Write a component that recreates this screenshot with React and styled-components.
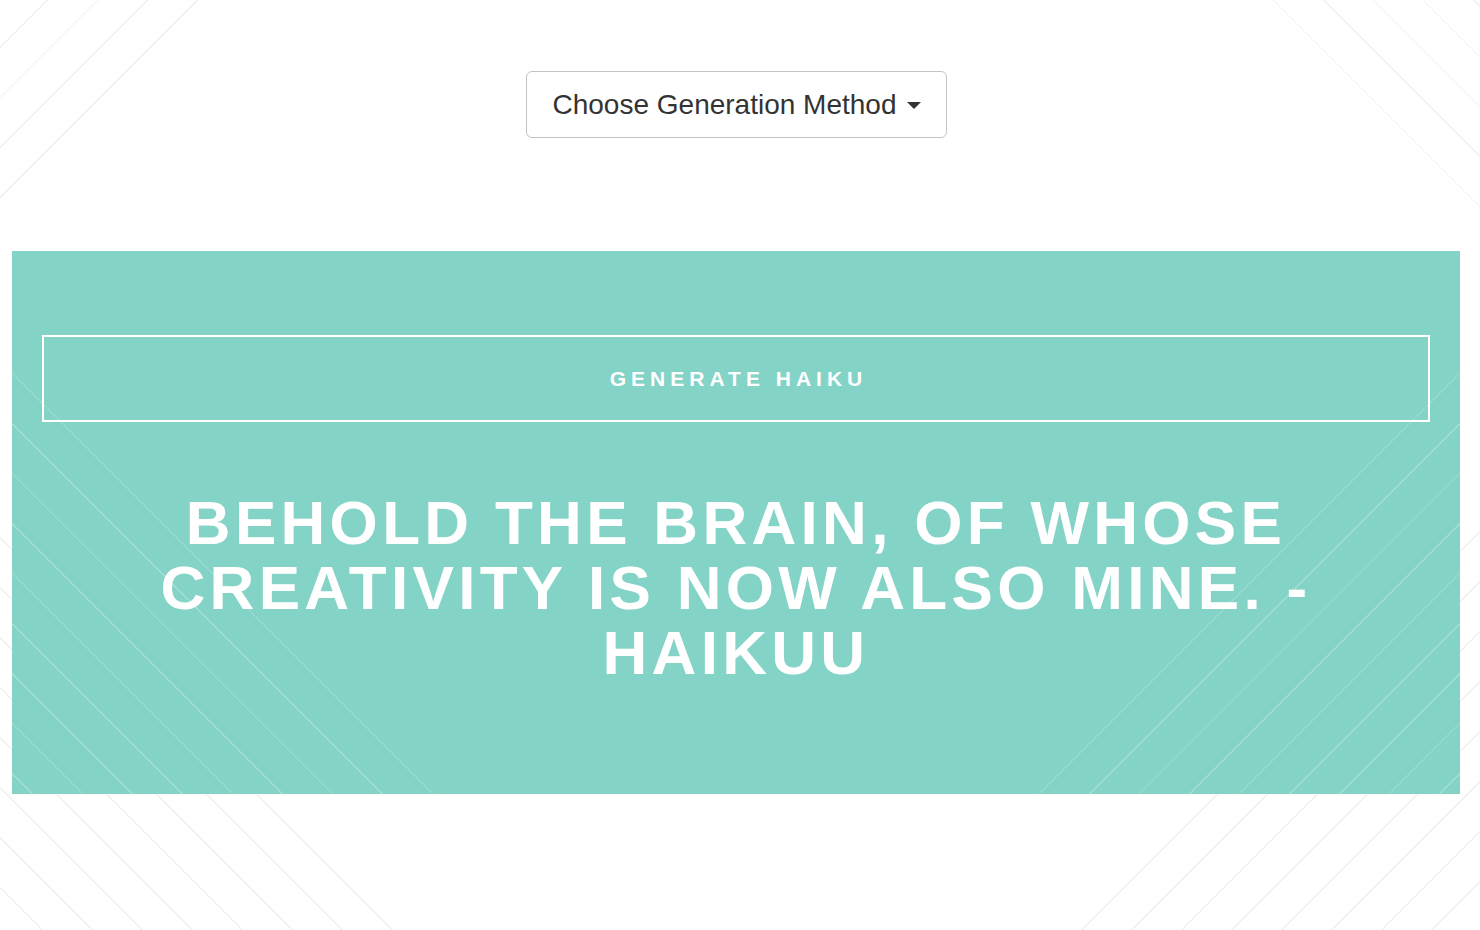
import React, { useState } from "react";
import styled, { createGlobalStyle } from "styled-components";

const S2 = Math.SQRT2;

// builds a gradient of thin 1px hairlines at the given distances (px) along the angle
function hairlines(angle, color, distances) {
  const stops = distances
    .slice()
    .sort((a, b) => a - b)
    .map((d) => `transparent ${d.toFixed(1)}px, ${color} ${d.toFixed(1)}px, ${color} ${(d + 1).toFixed(1)}px, transparent ${(d + 1).toFixed(1)}px`)
    .join(", ");
  return `linear-gradient(${angle}deg, ${stops}, transparent)`;
}

function steps(from, count, step) {
  const out = [];
  for (let i = 0; i < count; i++) out.push(from + i * step);
  return out;
}

const greyLine = "rgba(0, 0, 0, 0.06)";
const whiteLine = "rgba(255, 255, 255, 0.26)";

const pageLines = [
  hairlines(135, greyLine, [47, 97, 147, 197].map((c) => c / S2)),
  hairlines(225, greyLine, [1474, 1424, 1374, 1324, 1274].map((c) => (1480 - c) / S2)),
  hairlines(45, greyLine, steps(277 - 35.36 * 7, 8, 35.36)),
  hairlines(315, greyLine, steps(281.4 - 35.36 * 7, 8, 35.36)),
].join(", ");

const panelLines = [
  hairlines(45, whiteLine, steps(297 - 35.36 * 8, 9, 35.36)),
  hairlines(315, whiteLine, steps(297 - 35.36 * 8, 9, 35.36)),
].join(", ");

const GlobalStyle = createGlobalStyle`
  html, body {
    margin: 0;
    padding: 0;
    background: #fff;
  }
  * { box-sizing: border-box; }
`;

const Page = styled.div`
  min-height: 100vh;
  padding: 71px 20px 40px 12px;
  font-family: "Liberation Sans", Arial, "Helvetica Neue", sans-serif;
  background-color: #fff;
  background-image: ${pageLines};
  background-repeat: no-repeat;
`;

const Toolbar = styled.div`
  display: flex;
  justify-content: center;
  position: relative;
`;

const DropdownButton = styled.button`
  display: flex;
  align-items: center;
  gap: 10px;
  height: 67px;
  padding: 0 25px 0 26px;
  background: #fff;
  border: 1.5px solid #c4c4c4;
  border-radius: 6px;
  font-family: inherit;
  font-size: 28px;
  color: #333;
  cursor: pointer;
`;

const Caret = styled.span`
  width: 0;
  height: 0;
  margin-top: 2px;
  border-left: 7px solid transparent;
  border-right: 7px solid transparent;
  border-top: 7px solid #333;
`;

const Menu = styled.ul`
  position: absolute;
  top: 72px;
  margin: 0;
  padding: 6px 0;
  list-style: none;
  background: #fff;
  border: 1px solid #ccc;
  border-radius: 4px;
  box-shadow: 0 6px 12px rgba(0, 0, 0, 0.18);
  font-size: 18px;
  color: #333;
  z-index: 2;

  li {
    padding: 8px 24px;
    cursor: pointer;
  }
  li:hover { background: #f2f2f2; }
`;

const Panel = styled.section`
  margin-top: 113px;
  padding: 84px 30px 109px;
  background-color: #84d3c7;
  background-image: ${panelLines};
  background-repeat: no-repeat;
  display: flex;
  flex-direction: column;
  align-items: center;
`;

const GenerateButton = styled.button`
  width: 100%;
  height: 87px;
  background: transparent;
  border: 2px solid #fff;
  color: #fff;
  font-family: inherit;
  font-weight: bold;
  font-size: 21px;
  letter-spacing: 5px;
  text-indent: 5px;
  text-transform: uppercase;
  cursor: pointer;
`;

const Haiku = styled.h1`
  max-width: 1190px;
  margin: 68px 0 0;
  color: #fff;
  font-weight: bold;
  font-size: 62px;
  line-height: 65px;
  letter-spacing: 4.3px;
  text-align: center;
  text-transform: uppercase;
`;

const methods = ["Markov Chain", "Random Words", "Neural Network"];

export default function App() {
  const [open, setOpen] = useState(false);

  return (
    <>
      <GlobalStyle />
      <Page>
        <Toolbar>
          <DropdownButton onClick={() => setOpen(!open)}>
            Choose Generation Method
            <Caret />
          </DropdownButton>
          {open && (
            <Menu>
              {methods.map((m) => (
                <li key={m} onClick={() => setOpen(false)}>{m}</li>
              ))}
            </Menu>
          )}
        </Toolbar>

        <Panel>
          <GenerateButton>Generate Haiku</GenerateButton>
          <Haiku>Behold the brain, of whose creativity is now also mine. - Haikuu</Haiku>
        </Panel>
      </Page>
    </>
  );
}
